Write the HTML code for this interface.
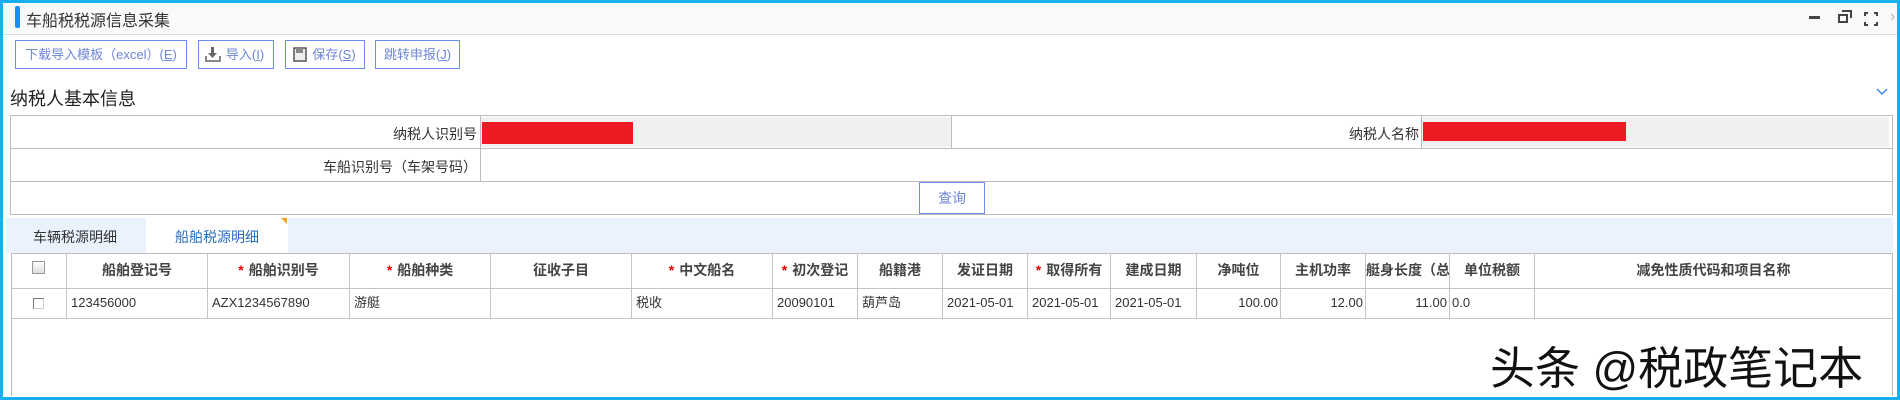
<!DOCTYPE html>
<html><head><meta charset="utf-8"><style>
*{margin:0;padding:0;box-sizing:border-box}
body{width:1900px;height:400px;overflow:hidden;background:#fff;font-family:"Liberation Sans","Noto Sans CJK SC",sans-serif;color:#333;position:relative}
.a{position:absolute}
.btn{position:absolute;top:40px;height:29px;border:1px solid #6a8ee8;color:#6d86d6;font-size:13px;line-height:27px;text-align:center;background:#fff}
.cell{position:absolute;border-right:1px solid #c4c4c4;font-size:13px;white-space:nowrap;overflow:hidden}
.h{top:253px;height:35px;line-height:35px;text-align:center;font-weight:bold;font-size:14px;color:#444}
.d{top:288px;height:30px;line-height:30px;padding-left:4px}
.r{text-align:right;padding-right:2px;padding-left:0}
.s{color:#e00;margin-right:5px}
</style></head><body>
<div class="a" style="left:0;top:0;width:1900px;height:400px;border:3px solid #17b0ef;border-top-width:3px"></div>
<div class="a" style="left:3px;top:3px;width:1894px;height:32px;background:#f8f9fb;border-bottom:1px solid #dcdde0"></div>
<div class="a" style="left:15px;top:6px;width:5px;height:22px;background:#1c8cf0;border-radius:2px"></div>
<div class="a" style="left:26px;top:7px;font-size:16px;color:#333">车船税税源信息采集</div>
<div class="a" style="left:1809px;top:16px;width:11px;height:3px;background:#444"></div>
<div class="a" style="left:1838px;top:14px;width:10px;height:9px;border:2px solid #444;background:#f8f9fb"></div>
<div class="a" style="left:1842px;top:10px;width:10px;height:8px;border:2px solid #444;border-bottom:none;border-left:none"></div>
<div class="a" style="left:1864px;top:12px;width:14px;height:14px;border:2px solid #444"></div>
<div class="a" style="left:1868px;top:12px;width:6px;height:14px;background:#f8f9fb"></div>
<div class="a" style="left:1864px;top:16px;width:14px;height:6px;background:#f8f9fb"></div>
<div class="a" style="left:1890px;top:8px;color:#bbb;font-size:16px">›</div>

<div class="btn" style="left:15px;width:172px">下载导入模板（excel）(<u>E</u>)</div>
<div class="btn" style="left:198px;width:76px;padding-left:18px">导入(<u>I</u>)
<svg class="a" style="left:6px;top:6px" width="16" height="15" viewBox="0 0 16 15"><path d="M6 0h3v6h3l-4.5 5L3 6h3z" fill="#666"/><path d="M1 9v5h14V9" stroke="#888" stroke-width="2" fill="none"/></svg></div>
<div class="btn" style="left:285px;width:80px;padding-left:18px">保存(<u>S</u>)
<svg class="a" style="left:7px;top:6px" width="14" height="15" viewBox="0 0 14 15"><rect x="1" y="1" width="12" height="13" fill="#eee" stroke="#555" stroke-width="1.5"/><rect x="3" y="1" width="7" height="5" fill="#888"/></svg></div>
<div class="btn" style="left:375px;width:85px">跳转申报(<u>J</u>)</div>

<div class="a" style="left:10px;top:85px;font-size:18px;color:#222">纳税人基本信息</div>
<svg class="a" style="left:1876px;top:88px" width="12" height="8" viewBox="0 0 12 8"><path d="M1 1l5 5 5-5" stroke="#3a8ee6" stroke-width="1.5" fill="none"/></svg>

<div class="a" style="left:10px;top:115px;width:1883px;height:100px;border:1px solid #bdbdbd"></div>
<div class="a" style="left:10px;top:148px;width:1883px;border-top:1px solid #bdbdbd"></div>
<div class="a" style="left:10px;top:181px;width:1883px;border-top:1px solid #bdbdbd"></div>
<div class="a" style="left:480px;top:116px;height:65px;border-left:1px solid #bdbdbd"></div>
<div class="a" style="left:481px;top:117px;width:470px;height:30px;background:#f0f0f0"></div>
<div class="a" style="left:951px;top:116px;height:32px;border-left:1px solid #bdbdbd"></div>
<div class="a" style="left:1421px;top:116px;height:32px;border-left:1px solid #bdbdbd"></div>
<div class="a" style="left:1422px;top:117px;width:467px;height:30px;background:#f0f0f0"></div>
<div class="a" style="left:482px;top:122px;width:151px;height:22px;background:#ed1c24"></div>
<div class="a" style="left:1423px;top:122px;width:203px;height:19px;background:#ed1c24"></div>
<div class="a" style="left:10px;top:124px;width:467px;text-align:right;font-size:14px">纳税人识别号</div>
<div class="a" style="left:951px;top:124px;width:468px;text-align:right;font-size:14px">纳税人名称</div>
<div class="a" style="left:10px;top:157px;width:467px;text-align:right;font-size:14px">车船识别号（车架号码）</div>
<div class="a" style="left:919px;top:182px;width:66px;height:32px;border:1px solid #6a8ee8;color:#6d86d6;font-size:14px;line-height:30px;text-align:center">查询</div>

<div class="a" style="left:6px;top:218px;width:1887px;height:35px;background:#eaf2fe"></div>
<div class="a" style="left:146px;top:218px;width:142px;height:35px;background:#fff"></div>
<div class="a" style="left:281px;top:218px;width:0;height:0;border-top:6px solid #f0a020;border-left:6px solid transparent"></div>
<div class="a" style="left:33px;top:227px;font-size:14px;color:#333">车辆税源明细</div>
<div class="a" style="left:175px;top:227px;font-size:14px;color:#2a6ebd">船舶税源明细</div>

<div class="a" style="left:11px;top:253px;width:1882px;height:143px;border:1px solid #bdbdbd;border-bottom:none"></div>
<div class="a" style="left:11px;top:288px;width:1882px;border-top:1px solid #c4c4c4"></div>
<div class="a" style="left:11px;top:318px;width:1882px;border-top:1px solid #c4c4c4"></div>

<div class="cell h" style="left:11px;width:56px"><span style="display:inline-block;width:13px;height:13px;border:1px solid #999;background:linear-gradient(#fff,#ddd);vertical-align:middle;margin-top:-8px"></span></div>
<div class="cell h" style="left:67px;width:141px">船舶登记号</div>
<div class="cell h" style="left:208px;width:142px"><span class="s">*</span>船舶识别号</div>
<div class="cell h" style="left:350px;width:141px"><span class="s">*</span>船舶种类</div>
<div class="cell h" style="left:491px;width:141px">征收子目</div>
<div class="cell h" style="left:632px;width:141px"><span class="s">*</span>中文船名</div>
<div class="cell h" style="left:773px;width:85px"><span class="s">*</span>初次登记</div>
<div class="cell h" style="left:858px;width:85px">船籍港</div>
<div class="cell h" style="left:943px;width:85px">发证日期</div>
<div class="cell h" style="left:1028px;width:83px"><span class="s">*</span>取得所有</div>
<div class="cell h" style="left:1111px;width:86px">建成日期</div>
<div class="cell h" style="left:1197px;width:84px">净吨位</div>
<div class="cell h" style="left:1281px;width:85px">主机功率</div>
<div class="cell h" style="left:1366px;width:84px;text-align:left">艇身长度（总</div>
<div class="cell h" style="left:1450px;width:85px">单位税额</div>
<div class="cell h" style="left:1535px;width:357px;border-right:none">减免性质代码和项目名称</div>

<div class="cell d" style="left:11px;width:56px;text-align:center;padding:0"><span style="display:inline-block;width:11px;height:11px;border:1px solid #777;border-right-color:#ccc;border-bottom-color:#ccc;vertical-align:middle"></span></div>
<div class="cell d" style="left:67px;width:141px">123456000</div>
<div class="cell d" style="left:208px;width:142px">AZX1234567890</div>
<div class="cell d" style="left:350px;width:141px">游艇</div>
<div class="cell d" style="left:491px;width:141px"></div>
<div class="cell d" style="left:632px;width:141px">税收</div>
<div class="cell d" style="left:773px;width:85px">20090101</div>
<div class="cell d" style="left:858px;width:85px">葫芦岛</div>
<div class="cell d" style="left:943px;width:85px">2021-05-01</div>
<div class="cell d" style="left:1028px;width:83px">2021-05-01</div>
<div class="cell d" style="left:1111px;width:86px">2021-05-01</div>
<div class="cell d r" style="left:1197px;width:84px">100.00</div>
<div class="cell d r" style="left:1281px;width:85px">12.00</div>
<div class="cell d r" style="left:1366px;width:84px">11.00</div>
<div class="cell d" style="left:1450px;width:85px;padding-left:2px">0.0</div>

<div class="a" style="left:1490px;top:332px;font-size:45px;color:#111;letter-spacing:0px;text-shadow:2px 2px 0 #fff,-1px -1px 0 #fff">头条 @税政笔记本</div>
</body></html>
